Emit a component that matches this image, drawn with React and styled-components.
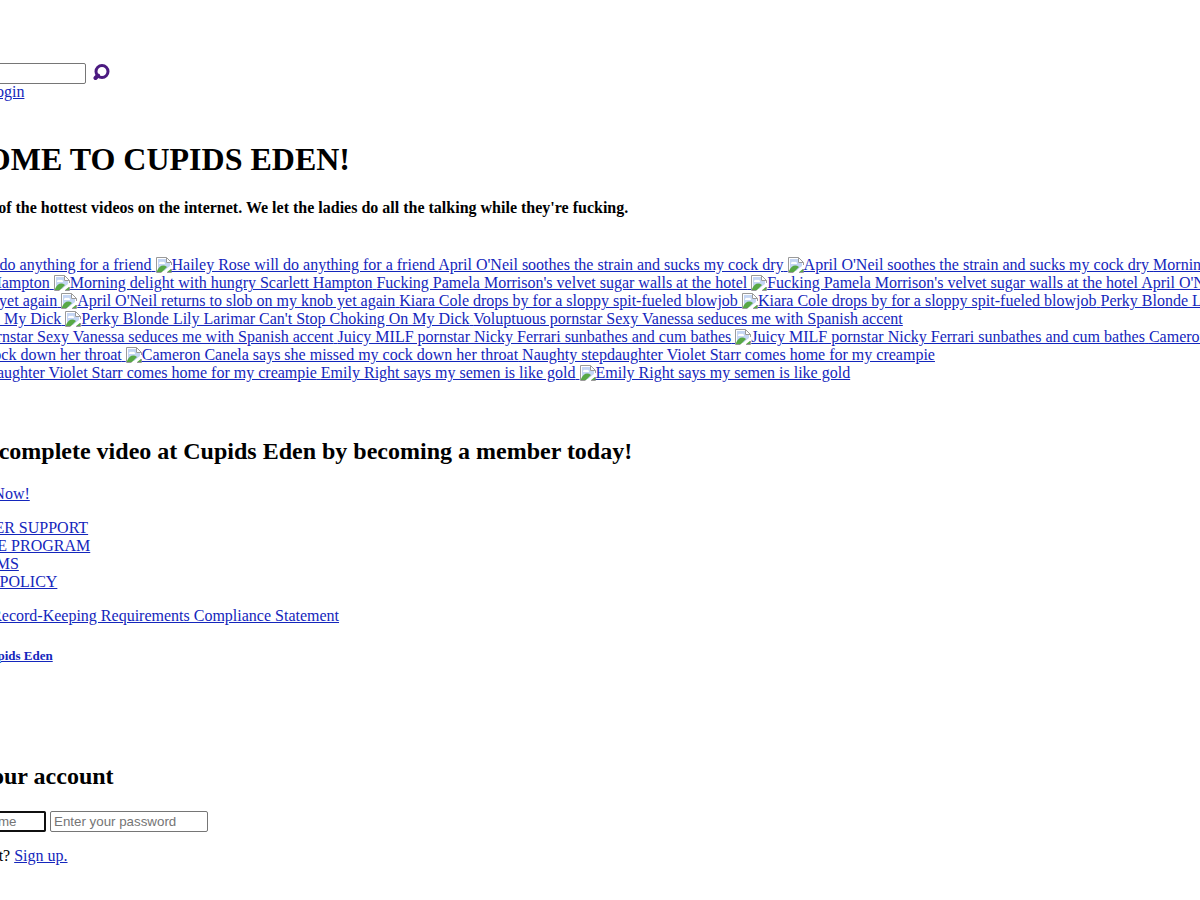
import React from "react";
import styled, { createGlobalStyle } from "styled-components";

const GlobalStyle = createGlobalStyle`
  body {
    margin: 0;
    background: #fff;
    color: #000;
    font: 16px/18px "Liberation Serif", "Times New Roman", serif;
  }
`;

const Viewport = styled.div`
  overflow-x: clip;
`;

const Page = styled.main`
  margin: 0 -112px;
  padding: 63px 0 35px;
`;

const Link = styled.a`
  color: #1426bc;
  text-decoration: underline;
`;

const List = styled.ul`
  list-style: none;
  margin: ${(p) => p.$margin || "0"};
  padding: 0 0 0 40px;
`;

const SearchForm = styled.form`
  display: flex;
  align-items: center;
  gap: 7px;
  height: 20px;
`;

const Field = styled.input`
  box-sizing: border-box;
  width: 158px;
  height: 21px;
  margin: 0;
  padding: 1px 3px;
  border: 1px solid #767676;
  border-radius: 2px;
  background: #fff;
  font-family: "Liberation Sans", Arial, sans-serif;
  outline: ${(p) => (p.$active ? "2px solid #101010" : "none")};
  outline-offset: -2px;

  &::placeholder {
    color: #757575;
  }
`;

const IconButton = styled.button`
  display: flex;
  padding: 0;
  border: 0;
  background: none;
  cursor: pointer;
`;

const Title = styled.h1`
  margin: 40px 0 21px;
  font-size: 32px;
  line-height: 37px;
`;

const Tagline = styled.h4`
  margin: 0 0 39px;
  font-size: 16px;
`;

const Heading = styled.h2`
  margin: ${(p) => p.$top}px 0 20px;
  font-size: 24px;
  line-height: 27px;
`;

const Paragraph = styled.p`
  margin: 16px 0;
`;

const Copyright = styled.h5`
  margin: 23px 0 0;
  font-size: 13px;
  line-height: 15px;
`;

const LoginForm = styled.form`
  display: flex;
  gap: 4px;
  margin: 21px 0 15px;
`;

const Thumb = styled.span`
  display: inline-block;
  height: 18px;
  vertical-align: bottom;
  text-decoration: underline;
  white-space: nowrap;

  svg {
    width: 16px;
    height: 16px;
    vertical-align: -3px;
  }
`;

const videos = [
  "Hailey Rose will do anything for a friend",
  "April O'Neil soothes the strain and sucks my cock dry",
  "Morning delight with hungry Scarlett Hampton",
  "Fucking Pamela Morrison's velvet sugar walls at the hotel",
  "April O'Neil returns to slob on my knob yet again",
  "Kiara Cole drops by for a sloppy spit-fueled blowjob",
  "Perky Blonde Lily Larimar Can't Stop Choking On My Dick",
  "Voluptuous pornstar Sexy Vanessa seduces me with Spanish accent",
  "Juicy MILF pornstar Nicky Ferrari sunbathes and cum bathes",
  "Cameron Canela says she missed my cock down her throat",
  "Naughty stepdaughter Violet Starr comes home for my creampie",
  "Emily Right says my semen is like gold",
];

const footerLinks = ["CUSTOMER SUPPORT", "AFFILIATE PROGRAM", "SITE TERMS", "PRIVACY POLICY"];

function MissingImage() {
  return (
    <svg viewBox="0 0 16 16" aria-hidden="true">
      <path d="M0.500 0.500H10.500L15.500 5.500V15.500H0.500Z" fill="#fff" />
      <path d="M2 2H10V6H14V9L8 14H2Z" fill="#c5d6f4" />
      <path d="M3 7a2 2 0 0 1 3-2 2 2 0 0 1 3 2Z" fill="#fff" />
      <path d="M1 14C3 9 7 7 11 10L6 15H1Z" fill="#58a846" />
      <path d="M10 15L15 11V15Z" fill="#58a846" />
      <path d="M5.500 15.500H0.500V0.500H10.500L15.500 5.500V8M10.500 0.500V5.500H15.500M15.500 12V15.500H11" fill="none" stroke="#9a9a9a" />
      <path d="M6 16L16 8V11L10 16Z" fill="#fff" />
    </svg>
  );
}

function Video({ title }) {
  return (
    <Link href="#">
      {title}{" "}
      <Thumb>
        <MissingImage />
        {title}
      </Thumb>{" "}
    </Link>
  );
}

export default function App() {
  return (
    <Viewport>
      <GlobalStyle />
      <Page>
        <List>
          <li>
            <SearchForm>
              <Field type="text" aria-label="Search" />
              <IconButton type="button" aria-label="Search">
                <svg width="17" height="18" viewBox="0 0 17 18" fill="none" stroke="#4b1a80">
                  <circle cx="9" cy="7.500" r="6" strokeWidth="3" />
                  <path d="M5 11.500L2.500 14" strokeWidth="4" strokeLinecap="round" />
                </svg>
              </IconButton>
            </SearchForm>
          </li>
          <li>
            <Link href="#">Member Login</Link>
          </li>
        </List>
        <Title>WELCOME TO CUPIDS EDEN!</Title>
        <Tagline>
          Featuring some of the hottest videos on the internet. We let the ladies do all the talking while they're fucking.
        </Tagline>
        <div>
          {videos.map((title) => (
            <Video key={title} title={title} />
          ))}
        </div>
        <Heading $top={56}>Watch the complete video at Cupids Eden by becoming a member today!</Heading>
        <Link href="#">Get Full Access Now!</Link>
        <List $margin="16px 0">
          {footerLinks.map((label) => (
            <li key={label}>
              <Link href="#">{label}</Link>
            </li>
          ))}
        </List>
        <Paragraph>
          <Link href="#">18 U.S.C. 2257 Record-Keeping Requirements Compliance Statement</Link>
        </Paragraph>
        <Copyright>
          <Link href="#">Copyright, 2024 Cupids Eden</Link>
        </Copyright>
        <Heading $top={100}>Login to your account</Heading>
        <LoginForm>
          <Field $active type="text" aria-label="Username" placeholder="Enter your username" />
          <Field type="password" aria-label="Password" placeholder="Enter your password" />
        </LoginForm>
        <div>
          Not a member yet? <Link href="#">Sign up.</Link>
        </div>
      </Page>
    </Viewport>
  );
}
